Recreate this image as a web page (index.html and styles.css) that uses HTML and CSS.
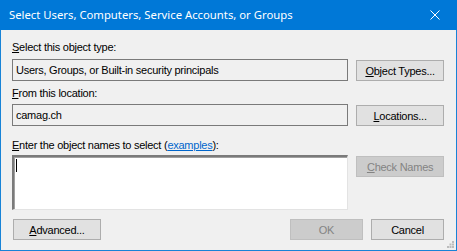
FILE: index.html
```html
<!DOCTYPE html>
<html lang="en">
<head>
    <meta charset="UTF-8">
    <title>Select Users, Computers, Service Accounts, or Groups</title>
    <link rel="stylesheet" href="styles.css">
</head>
<body>

<div class="window">
    <div class="titlebar">
        <span class="title">Select Users, Computers, Service Accounts, or Groups</span>
        <button class="close" title="Close">
            <svg width="10" height="10" viewBox="0 0 10 10">
                <path d="M0.5 0.5 L9.5 9.5 M9.5 0.5 L0.5 9.5" stroke="#fff" stroke-width="1"/>
            </svg>
        </button>
    </div>

    <div class="content">
        <!-- type d'objet -->
        <div class="label first"><u>S</u>elect this object type:</div>
        <div class="row">
            <div class="field">Users, Groups, or Built-in security principals</div>
            <button class="btn"><u>O</u>bject Types...</button>
        </div>

        <!-- emplacement -->
        <div class="label second"><u>F</u>rom this location:</div>
        <div class="row">
            <div class="field">camag.ch</div>
            <button class="btn"><u>L</u>ocations...</button>
        </div>

        <!-- noms -->
        <div class="label third"><u>E</u>nter the object names to select (<a href="#">examples</a>):</div>
        <div class="row">
            <div class="names"><span class="caret"></span></div>
            <button class="btn disabled"><u>C</u>heck Names</button>
        </div>

        <div class="bottom">
            <button class="btn"><u>A</u>dvanced...</button>
            <div class="spacer"></div>
            <button class="btn small disabled">OK</button>
            <button class="btn small">Cancel</button>
        </div>
    </div>

    <svg class="grip" width="7" height="7" viewBox="0 0 7 7">
        <rect x="5" y="0" width="2" height="2" fill="#bcbcbc"/>
        <rect x="2.5" y="2.5" width="2" height="2" fill="#bcbcbc"/>
        <rect x="5" y="2.5" width="2" height="2" fill="#bcbcbc"/>
        <rect x="0" y="5" width="2" height="2" fill="#bcbcbc"/>
        <rect x="2.5" y="5" width="2" height="2" fill="#bcbcbc"/>
        <rect x="5" y="5" width="2" height="2" fill="#bcbcbc"/>
    </svg>
</div>

</body>
</html>
```

FILE: styles.css
```css
body {
    margin: 0;
    background: #ffffff;
}

.window {
    position: relative;
    width: 457px;
    height: 251px;
    box-sizing: border-box;
    border: 1px solid #1883d7;
    border-top: none;
    background-color: #f0f0f0;
    font-family: "Liberation Sans", Arial, sans-serif;
    font-size: 11px;
    letter-spacing: -0.25px;
    color: #000;
}

.titlebar {
    height: 30px;
    margin: 0 -1px;
    background-color: #0078d7;
    display: flex;
    align-items: center;
    padding-left: 9px;
}

.title {
    flex: 1;
    color: #fff;
    font-family: "Noto Sans", "Open Sans", sans-serif;
    font-size: 11.3px;
    letter-spacing: 0;
    line-height: 16px;
    margin-top: -1px;
}

.close {
    width: 46px;
    height: 30px;
    border: none;
    background: transparent;
    padding: 0;
    display: flex;
    align-items: center;
    justify-content: center;
}

.close svg {
    margin-left: 1px;
}

.content {
    padding: 0 12px 0 11px;
    display: flex;
    flex-direction: column;
}

.label {
    line-height: 13px;
    height: 13px;
}

.label u, .btn u {
    text-decoration: underline;
    text-underline-offset: 1px;
}

.first { margin-top: 11px; }
.second { margin-top: 6px; }
.third { margin-top: 13px; }

.label a {
    color: #0066cc;
}

.row {
    display: flex;
    align-items: flex-start;
    gap: 8px;
    margin-top: 5px;
}

.second + .row { margin-top: 4px; }
.third + .row { margin-top: 3px; }

.field {
    width: 337px;
    height: 22px;
    box-sizing: border-box;
    border: 1px solid #7a7a7a;
    background-color: #f0f0f0;
    padding-left: 3px;
    line-height: 20px;
    white-space: nowrap;
}

.names {
    width: 337px;
    height: 55px;
    box-sizing: border-box;
    background: #fff;
    border-top: 2px solid #7a7a7a;
    border-left: 2px solid #7a7a7a;
    border-right: 1px solid #e3e3e3;
    border-bottom: 1px solid #e3e3e3;
    box-shadow: inset 1px 1px 0 #a0a0a0;
    padding: 2px 0 0 2px;
}

.caret {
    display: block;
    width: 1px;
    height: 13px;
    background: #000;
}

.btn {
    width: 88px;
    height: 21px;
    margin-top: 1px;
    box-sizing: border-box;
    border: 1px solid #adadad;
    background-color: #e1e1e1;
    font-family: "Liberation Sans", Arial, sans-serif;
    font-size: 11px;
    letter-spacing: -0.25px;
    color: #000;
    padding: 0;
    line-height: 18px;
}

.btn.disabled {
    background-color: #cccccc;
    border-color: #bfbfbf;
    color: #838383;
}

.bottom {
    display: flex;
    gap: 8px;
    margin-top: 9px;
    padding-left: 1px;
}

.bottom .btn { margin-top: 0; }

.spacer { flex: 1; }

.btn.small {
    width: 73px;
}

.grip {
    position: absolute;
    right: 2px;
    bottom: 2px;
}
```
